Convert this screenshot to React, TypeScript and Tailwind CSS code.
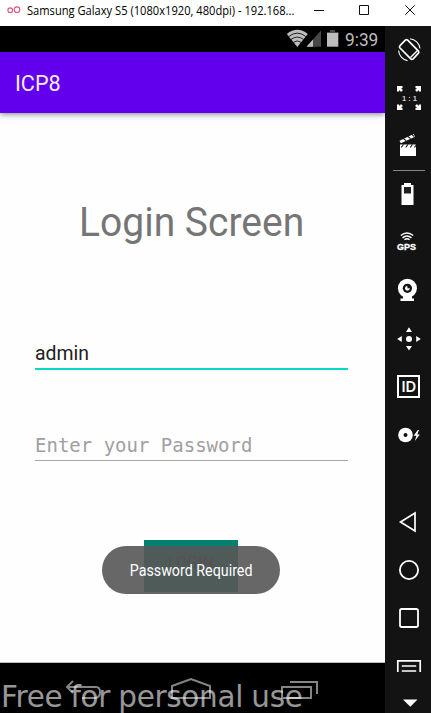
import React from "react";

function Tool({ children, divider = false }: { children: React.ReactNode; divider?: boolean }) {
  return (
    <div className="relative h-12 w-[46px] shrink-0">
      <svg width="46" height="48" viewBox="0 0 46 48" fill="#fff" stroke="none" className="block">
        {children}
      </svg>
      {divider && <div className="absolute bottom-[-1px] left-2 h-px w-8 bg-[#858585]" />}
    </div>
  );
}

function Sidebar() {
  return (
    <aside className="flex w-[46px] shrink-0 flex-col bg-[#131313]">
      <Tool>
        <g fill="none" stroke="#fff">
          <path d="M20.3 14.2 Q21.5 13.2 22.7 14.2 L33.5 25.2 Q34.4 26.2 33.4 27.2 L28.2 32.9 Q27 34 25.8 32.9 L14.8 21.8 Q14 20.8 15 19.7 Z" strokeWidth="1.7" />
          <path d="M25.5 31.5 L32.5 24.5" strokeWidth="1.5" />
          <path d="M25 12.7 A11 11 0 0 1 35 22.5 M13.6 24.5 A11 11 0 0 0 22.5 34.6" strokeWidth="1.1" />
        </g>
      </Tool>
      <Tool>
        <path d="M12 12h5.5v2l-1.5.5 2 1.5-2 2-1.5-2-.5 1.5h-2zM36 12h-5.5v2l1.5.5-2 1.5 2 2 1.5-2 .5 1.5h2zM12 36h5.5v-2l-1.5-.5 2-1.5-2-2-1.5 2-.5-1.5h-2zM36 36h-5.5v-2l1.5-.5-2-1.5 2-2 1.5 2 .5-1.5h2z" />
        <text x="17" y="26.8" fontSize="7.5" fontWeight="700" className="font-['Liberation_Sans',sans-serif]" fill="#d0d0d0" textLength="15">1 : 1</text>
      </Tool>
      <Tool divider>
        <path d="M15 22.5h16V34H15z" />
        <path d="M14.5 18.7 L28.7 12.1 L30 14.7 L15.8 21.2z" />
        <path d="M18 16.2l3.1 2.4M22.5 14.2l3.1 2.4M26.7 12.2l2.5 2.4M18.5 22.5l-2.3 3M23 22.5l-2.3 3M27.5 22.5l-2.3 3M31.5 22.5l-2 3" stroke="#131313" strokeWidth="1.1" />
      </Tool>
      <Tool>
        <path d="M19 13h7v2h2.5v20h-12V15H19z" />
        <path d="M19 17h7v6.5h-7z" fill="#202020" />
      </Tool>
      <Tool>
        <g fill="none" stroke="#fff" strokeWidth="1.5">
          <path d="M15.8 17.5 Q22 12.5 28.2 17.5M17.5 19.8Q22 16.2 26.5 19.8M19.5 21.8Q22 19.7 24.5 21.8" />
        </g>
        <text x="12" y="31.7" fontSize="8.7" fontWeight="700" textLength="19" lengthAdjust="spacingAndGlyphs" stroke="#fff" strokeWidth=".3" className="font-['Liberation_Sans',sans-serif]">GPS</text>
      </Tool>
      <Tool>
        <circle cx="22.4" cy="22.3" r="9.5" />
        <circle cx="22.4" cy="22.3" r="4.6" fill="#131313" />
        <circle cx="22.4" cy="22.3" r="2.4" />
        <path d="M22.4 19.8h2.5v2.5h-2.5z" fill="#131313" />
        <path d="M18 30h9v2.5h2V35H15.5v-2.5H18z" />
      </Tool>
      <Tool>
        <circle cx="24" cy="25" r="3" />
        <path d="M24 13.3l3 4.6h-6zM24 36.5l3-4.6h-6zM12.2 25l4.6-3v6zM35.8 25l-4.6-3v6z" />
      </Tool>
      <Tool>
        <path d="M13 14h21v21H13z" fill="none" stroke="#fff" strokeWidth="2" />
        <text x="16.4" y="30.3" fontSize="15.5" fontWeight="700" textLength="14.5" lengthAdjust="spacingAndGlyphs" className="font-['Lato',sans-serif]">ID</text>
      </Tool>
      <Tool>
        <circle cx="20.5" cy="25" r="7.3" />
        <circle cx="20.5" cy="25" r="2" fill="#131313" />
        <path d="M32.8 20l-4.2 5.8h2.8L29.8 31l5.1-6.5h-2.6l1.7-4.5z" />
      </Tool>
      <div className="h-10 shrink-0" />
      <Tool>
        <path d="M15.5 24L30 15v18z" fill="none" stroke="#fff" strokeWidth="1.7" />
      </Tool>
      <Tool>
        <circle cx="24" cy="24" r="9.1" fill="none" stroke="#fff" strokeWidth="1.8" />
      </Tool>
      <Tool>
        <rect x="15" y="15" width="18" height="18" rx="1.7" fill="none" stroke="#fff" strokeWidth="1.8" />
      </Tool>
      <Tool>
        <path d="M12.8 30V18.8h22.4V30M16.8 24h14.4M16.8 29h14.4" fill="none" stroke="#fff" strokeWidth="1.7" />
      </Tool>
      <svg width="46" height="23" viewBox="0 0 46 23" className="block">
        <path d="M18 9.4h14.5L25.3 16.8z" fill="#fff" />
      </svg>
    </aside>
  );
}

function StatusBar() {
  return (
    <div className="flex h-[26px] shrink-0 items-center bg-black pl-[286px]">
      <svg width="54" height="26" viewBox="0 0 54 26" fill="#bdbdbd">
        <path d="M.8 8 Q11.3 -.3 21.8 8 L11.3 21z" />
        <path d="M2.8 10.5 Q11.3 3.8 19.8 10.5M5 13.4Q11.3 8.8 17.6 13.4M7.2 16.4Q11.3 13.4 15.4 16.4" fill="none" stroke="#101010" strokeWidth=".9" />
        <path d="M20.5 20.7L35 4.5v16.2z" fill="#484848" />
        <path d="M20.5 20.7L27 13.5v7.2z" />
        <path d="M44 4h5v2h3.3v3H41V6h3z" fill="#4a4a4a" />
        <path d="M41 7h11.3v13.7H41z" />
      </svg>
      <span className="ml-[5px] mt-0.5 origin-left font-['Roboto',sans-serif] text-[18px] leading-[22px] text-[#bdbdbd] scale-x-[.96]">9:39</span>
    </div>
  );
}

export default function App() {
  return (
    <div className="relative flex h-[713px] w-[431px] flex-col overflow-hidden bg-white">
      <header className="flex h-[26px] shrink-0 items-center bg-white">
        <svg width="27" height="26" viewBox="0 0 27 26" fill="none" stroke="#e0527c" strokeWidth="1.1" className="shrink-0">
          <circle cx="10.2" cy="10.2" r="2.3" />
          <circle cx="17" cy="9.7" r="2.8" />
        </svg>
        <div className="w-[277px] shrink-0">
          <span className="-mt-1 block w-max origin-left scale-x-[.928] whitespace-nowrap font-['Open_Sans',sans-serif] text-[12px] leading-4 text-black">Samsung Galaxy S5 (1080x1920, 480dpi) - 192.168...</span>
        </div>
        <svg width="127" height="26" viewBox="0 0 127 26" fill="none" stroke="#111" strokeWidth="1">
          <path d="M10 10.5h10M55.5 5.5h9v9h-9zM101.3 5.3l9.4 9.4M110.7 5.3l-9.4 9.4" />
        </svg>
      </header>
      <div className="flex min-h-0 flex-1">
        <section className="flex w-[385px] shrink-0 flex-col overflow-hidden">
          <StatusBar />
          <div className="z-10 flex h-[61px] shrink-0 items-center bg-[#6200ee] pl-[15px] shadow-[0_1px_6px_rgba(0,0,0,.5)]">
            <span className="mt-0.5 origin-left scale-x-[.98] font-['Roboto',sans-serif] text-[22px] leading-7 text-[#f4edff]">ICP8</span>
          </div>
          <main className="flex h-[550px] shrink-0 flex-col border-b border-[#bbb] bg-[#fefefe] pl-[35px] pr-[37px]">
            <h1 className="ml-[44px] mt-[86px] w-max origin-left scale-x-[.975] self-start font-['Roboto',sans-serif] text-[40px] font-normal leading-[48px] text-[#757575]">Login Screen</h1>
            <div className="mt-[92px] flex h-[31px] items-start border-b-2 border-[#03dac5]">
              <span className="origin-left scale-x-[.97] font-['Roboto',sans-serif] text-[20px] leading-7 text-[#212121]">admin</span>
            </div>
            <div className="mt-[61px] flex h-[30px] items-start border-b border-[#a5a5a5]">
              <span className="whitespace-nowrap font-['DejaVu_Sans_Mono',monospace] text-[19px] leading-7 text-[#a0a0a0]">Enter your Password</span>
            </div>
            <div className="relative ml-[109px] mt-[79px] flex h-[52px] w-[94px] items-center justify-center bg-[#03806f]">
              <span className="-mt-1.5 font-['Roboto',sans-serif] text-[16px] text-[#701010]">LOGIN</span>
              <div className="absolute -left-[42px] top-[6px] flex h-12 w-[178px] items-center justify-center rounded-full bg-[#575757]/90 pt-0.5">
                <span className="scale-x-[.84] whitespace-nowrap font-['Roboto',sans-serif] text-[17px] text-white">Password Required</span>
              </div>
            </div>
          </main>
          <footer className="h-[50px] shrink-0 bg-black">
            <svg width="385" height="50" viewBox="0 0 385 50" fill="none" stroke="#858585" strokeWidth="2">
              <path d="M73 18l-6 6 6 6M67 24h29q4 0 4 5t-4 6H82M172 35V23l19-7 19 7v12zM282 24h29v11h-29zM290 19h27v12" />
            </svg>
          </footer>
        </section>
        <Sidebar />
      </div>
      <div className="pointer-events-none absolute left-px top-[679px] z-20 origin-left scale-x-[.95] whitespace-nowrap font-['DejaVu_Sans',sans-serif] text-[31px] leading-[34px] tracking-[-0.3px] text-white/60 [word-spacing:-1px]">Free for personal use</div>
    </div>
  );
}
